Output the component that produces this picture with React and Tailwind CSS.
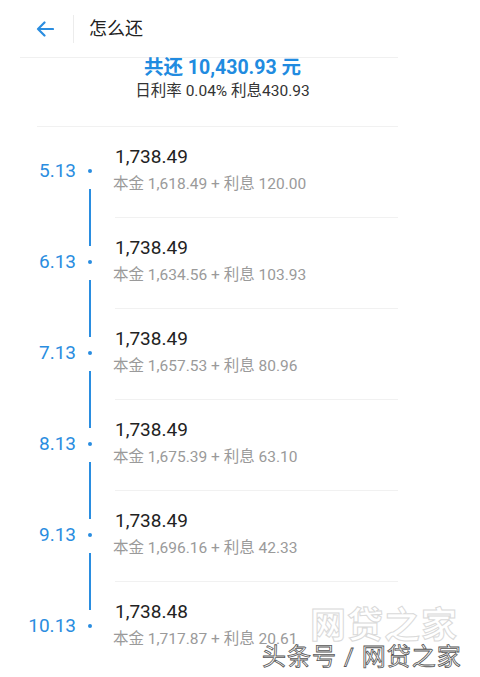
import React from "react";

const rows = [
  { date: "5.13", amount: "1,738.49", principal: "1,618.49", interest: "120.00" },
  { date: "6.13", amount: "1,738.49", principal: "1,634.56", interest: "103.93" },
  { date: "7.13", amount: "1,738.49", principal: "1,657.53", interest: "80.96" },
  { date: "8.13", amount: "1,738.49", principal: "1,675.39", interest: "63.10" },
  { date: "9.13", amount: "1,738.49", principal: "1,696.16", interest: "42.33" },
  { date: "10.13", amount: "1,738.48", principal: "1,717.87", interest: "20.61" },
];

const font = "font-['Roboto','Noto_Sans_CJK_SC',sans-serif]";

const Row = ({ item, first, last }) => (
  <div className="flex h-[91px]">
    {/* date + timeline */}
    <div className="w-[115px] flex shrink-0">
      <div className="w-[76px] text-right pt-[33px] text-[19px] leading-[22px] text-[#2a8de0]">
        {item.date}
      </div>
      <div className="w-[28px] flex flex-col items-center">
        <div className={`w-[2px] h-[28px] ${first ? "" : "bg-[#2a8de0]"}`}></div>
        <div className="h-[14px]"></div>
        <div className="w-[4px] h-[4px] rounded-full bg-[#2a8de0]"></div>
        <div className="h-[16px]"></div>
        <div className={`w-[2px] flex-1 ${last ? "" : "bg-[#2a8de0]"}`}></div>
      </div>
    </div>
    {/* amounts */}
    <div className={`flex-1 mr-[82px] pt-[18px] ${last ? "" : "border-b border-[#f1f1f1]"}`}>
      <div className="text-[19px] leading-[24px] text-[#222]">{item.amount}</div>
      <div className="mt-[5px] text-[15.5px] leading-[20px] text-[#9a9a9a] -ml-[2px]">
        本金 {item.principal} + 利息 {item.interest}
      </div>
    </div>
  </div>
);

export default function App() {
  return (
    <div className={`relative h-[677px] overflow-hidden bg-white ${font}`}>
      {/* header */}
      <div className="mx-[20px] mr-[82px] h-[58px] flex items-center border-b border-[#f0f0f0]">
        <div className="w-[53px] pl-[16px] flex items-center">
          <svg width="18" height="16" viewBox="0 0 18 16" fill="none">
            <path
              d="M17 8H2M8.5 1.5L2 8l6.5 6.5"
              stroke="#2a8de0"
              strokeWidth="2.2"
              strokeLinecap="round"
              strokeLinejoin="round"
            />
          </svg>
        </div>
        <div className="w-[1px] h-[28px] bg-[#ececec]"></div>
        <div className="ml-[15px] text-[18px] leading-[22px] text-[#222]">怎么还</div>
      </div>

      {/* summary */}
      <div className="ml-[37px] mr-[82px] h-[69px] border-b border-[#f1f1f1] flex flex-col items-center">
        <div className="text-[19.5px] leading-[19px] font-bold text-[#218be0] pl-[10px]">
          共还 10,430.93 元
        </div>
        <div className="mt-[5px] text-[15.5px] leading-[19px] text-[#333] pl-[10px]">
          日利率 0.04% 利息430.93
        </div>
      </div>

      {/* schedule */}
      <div>
        {rows.map((item, i) => (
          <Row key={i} item={item} first={i === 0} last={i === rows.length - 1} />
        ))}
      </div>

      {/* watermark */}
      <div className="absolute left-[310px] top-[606px] text-[36px] leading-[40px] font-bold tracking-[1px] text-white [-webkit-text-stroke:1px_#d6d6d6] opacity-90">
        网贷之家
      </div>
      <div className="absolute left-[262px] top-[643px] text-[24px] leading-[28px] tracking-[1px] text-white [-webkit-text-stroke:0.8px_#555]">
        头条号 / 网贷之家
      </div>
    </div>
  );
}
